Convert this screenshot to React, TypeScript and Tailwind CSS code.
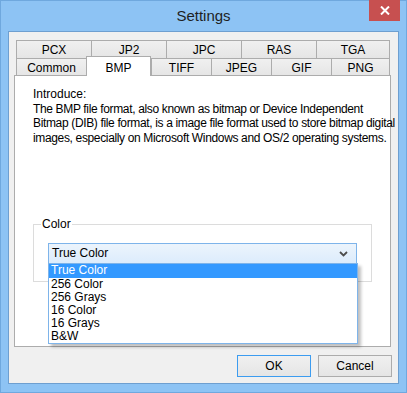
import React from "react"

const topTabs = [
  { label: "PCX", w: "w-[75px]" },
  { label: "JP2", w: "w-[75px]" },
  { label: "JPC", w: "w-[75px]" },
  { label: "RAS", w: "w-[75px]" },
  { label: "TGA", w: "w-[74px]" },
]

const bottomTabs = [
  { label: "Common", w: "w-[70px]" },
  { label: "BMP", w: "w-[65px]", selected: true },
  { label: "TIFF", w: "w-[60px]" },
  { label: "JPEG", w: "w-[60px]" },
  { label: "GIF", w: "w-[60px]" },
  { label: "PNG", w: "w-[59px]" },
]

const colorOptions = ["True Color", "256 Color", "256 Grays", "16 Color", "16 Grays", "B&W"]

const Tab = ({ label, w, last, selected }: { label: string; w: string; last?: boolean; selected?: boolean }) => {
  if (selected) {
    return (
      <div
        className={`${w} relative z-10 -mt-[2px] h-[20px] bg-white border-l border-t border-r border-[#ACACAC] flex items-start justify-center pt-[2px] text-[12px] text-black`}
      >
        {label}
      </div>
    )
  }
  return (
    <div
      className={`${w} h-[18px] border-l border-t ${last ? "border-r" : ""} border-[#ACACAC] bg-gradient-to-b from-[#F0F0F0] to-[#E5E5E5] flex items-center justify-center text-[12px] text-black`}
    >
      {label}
    </div>
  )
}

const Button = ({ label, focused }: { label: string; focused?: boolean }) => (
  <div
    className={`w-[74px] h-[22px] border ${
      focused ? "border-[#3C9CF0]" : "border-[#ACACAC]"
    } bg-gradient-to-b from-[#F0F0F0] to-[#E5E5E5] flex items-center justify-center text-[12px] text-black`}
  >
    {label}
  </div>
)

export default function App() {
  return (
    <div className="w-[407px] h-[393px] bg-[#8DC3F4] border border-[#6FA8DE] flex flex-col font-['Liberation_Sans',Arial,sans-serif] select-none">
      {/* title bar */}
      <div className="relative h-[30px] flex items-center justify-center">
        <span className="text-[15px] text-[#1F1F1F] pt-[1px]">Settings</span>
        <div className="absolute top-[-1px] right-[6px] w-[31px] h-[21px] bg-[#C75050] flex items-center justify-center">
          <svg width="10" height="9" viewBox="0 0 10 9">
            <path d="M1 0.5 L9 8.5 M9 0.5 L1 8.5" stroke="white" strokeWidth="2" />
          </svg>
        </div>
      </div>

      {/* client area */}
      <div className="mx-[7px] h-[353px] border border-[#6E9FD0] bg-[#F0F0F0] flex flex-col pt-[8px] pl-[5px]">
        <div className="ml-[2px] flex flex-col">
          <div className="flex">
            {topTabs.map((t, i) => (
              <Tab key={t.label} label={t.label} w={t.w} last={i === topTabs.length - 1} />
            ))}
          </div>
          <div className="flex h-[17px]">
            {bottomTabs.map((t, i) => (
              <Tab
                key={t.label}
                label={t.label}
                w={t.w}
                selected={t.selected}
                last={i === bottomTabs.length - 1}
              />
            ))}
          </div>
        </div>

        {/* tab page */}
        <div className="w-[377px] h-[272px] shrink-0 bg-white border border-[#ACACAC] pl-[18px] pt-[11px] text-[12px] text-black leading-[14.5px]">
          <p>Introduce:</p>
          <p className="whitespace-nowrap tracking-[-0.35px]">
            The BMP file format, also known as bitmap or Device Independent
            <br />
            Bitmap (DIB) file format, is a image file format used to store bitmap digital
            <br />
            images, especially on Microsoft Windows and OS/2 operating systems.
          </p>

          {/* group box */}
          <div className="relative mt-[79px] w-[339px] h-[58px] border border-[#DCDCDC]">
            <span className="absolute -top-[8px] left-[7px] bg-white px-[1px] leading-[14px]">Color</span>

            <div className="relative ml-[14px] mt-[18px] w-[309px]">
              <div className="h-[21px] border border-[#7EB4EA] bg-gradient-to-b from-[#ECF4FC] to-[#DCECFC] flex items-center justify-between pl-[3px] pr-[8px]">
                <span>True Color</span>
                <svg width="9" height="6" viewBox="0 0 9 6">
                  <path d="M1 1 L4.5 4.5 L8 1" stroke="#4D4D4D" strokeWidth="1.8" fill="none" />
                </svg>
              </div>

              {/* open list */}
              <div className="absolute left-0 top-[20px] w-[310px] bg-white border border-[#7EB4EA] shadow-[3px_3px_3px_rgba(0,0,0,0.25)] z-20 leading-[13px]">
                {colorOptions.map((c, i) => (
                  <div
                    key={c}
                    className={`pl-[2px] ${i === 0 ? "bg-[#3399FF] text-white h-[14px]" : "text-black h-[13px]"}`}
                  >
                    {c}
                  </div>
                ))}
              </div>
            </div>
          </div>
        </div>

        {/* buttons */}
        <div className="mt-[8px] flex justify-end gap-[7px] pr-[6px]">
          <Button label="OK" focused />
          <Button label="Cancel" />
        </div>
      </div>
    </div>
  )
}
